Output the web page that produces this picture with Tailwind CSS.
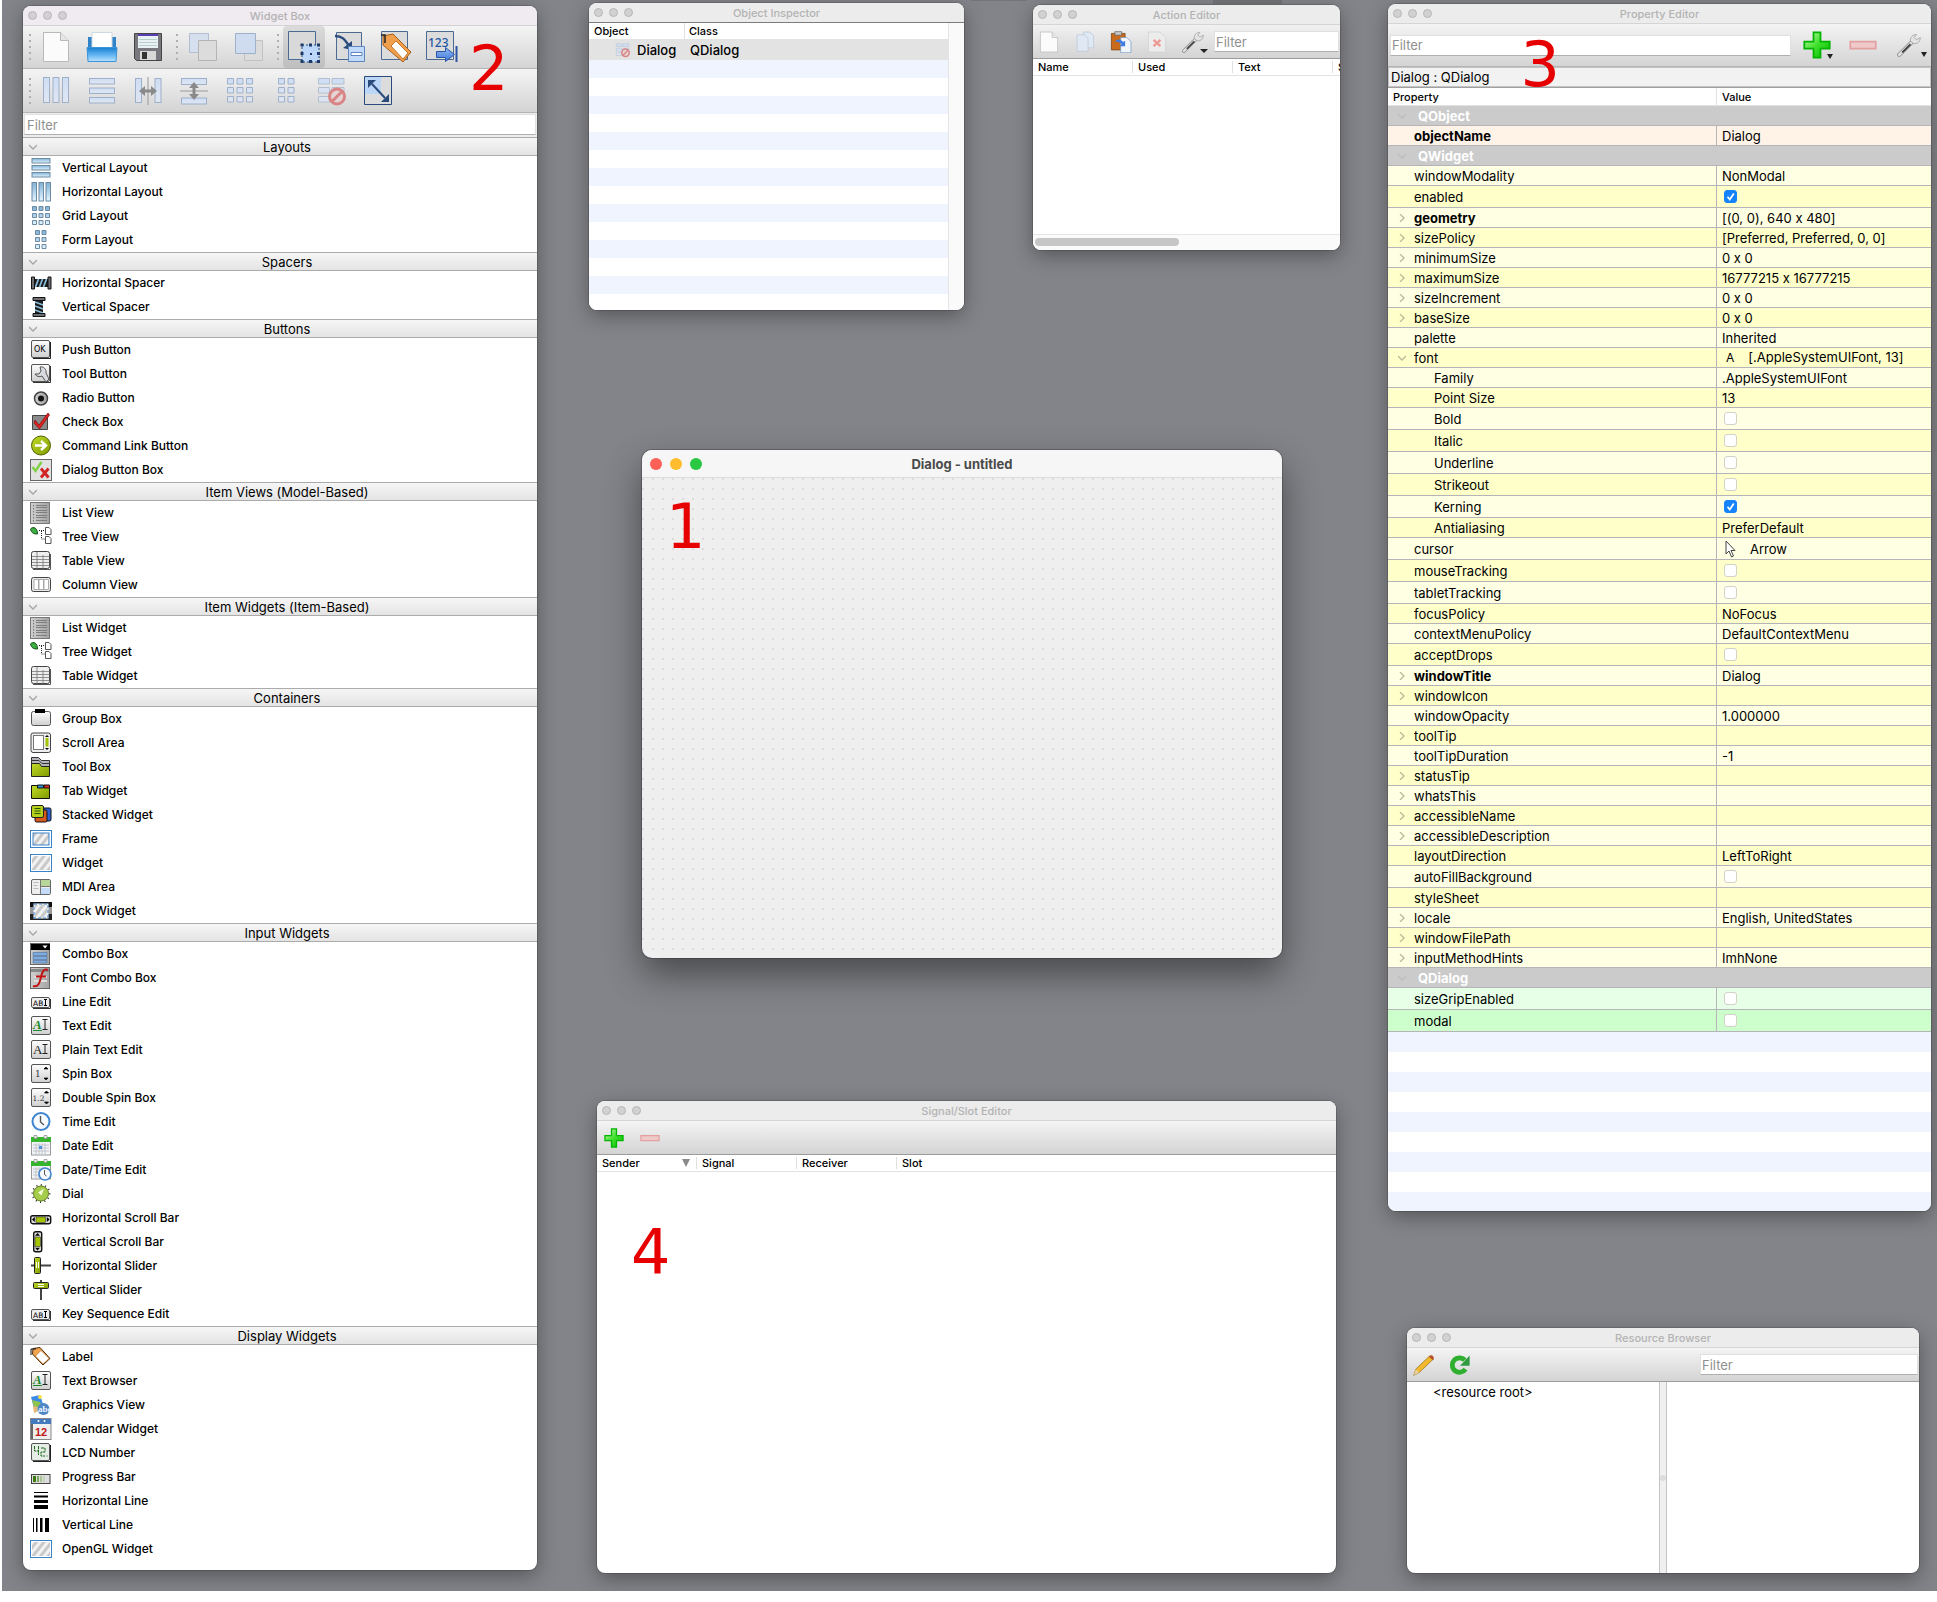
<!DOCTYPE html>
<html lang="en">
<head>
    <meta charset="UTF-8">
    <title>Qt Designer</title>
    <script src="https://cdn.jsdelivr.net/npm/@tailwindcss/browser@4"></script>
</head>
<body class="bg-white font-['Inter',sans-serif] text-[12px] leading-4 font-medium text-black [font-variant-ligatures:no-contextual]">

    <!-- gradients have to stay rendered, a hidden svg would drop them -->
    <svg class="absolute size-0" xmlns="http://www.w3.org/2000/svg">
        <defs>
            <linearGradient id="blue" x1="0" y1="0" x2="0" y2="1"><stop offset="0" stop-color="#7fb2d6"/><stop offset="1" stop-color="#e3f5ff"/></linearGradient>
            <linearGradient id="pale" x1="0" y1="0" x2="0" y2="1"><stop offset="0" stop-color="#cfdef5"/><stop offset="1" stop-color="#dfe6f1"/></linearGradient>
            <linearGradient id="grey" x1="0" y1="0" x2="0" y2="1"><stop offset="0" stop-color="#fdfdfd"/><stop offset="1" stop-color="#cfcfcf"/></linearGradient>
            <linearGradient id="dark" x1="0" y1="0" x2="1" y2="0"><stop offset="0" stop-color="#d0d0d0"/><stop offset="1" stop-color="#a2a2a2"/></linearGradient>
            <linearGradient id="green" x1="0" y1="0" x2="1" y2="1"><stop offset="0" stop-color="#c8f7b0"/><stop offset="0.5" stop-color="#3fe02c"/><stop offset="1" stop-color="#00b800"/></linearGradient>
            <linearGradient id="tray" x1="0" y1="0" x2="0" y2="1"><stop offset="0" stop-color="#1a7fd0"/><stop offset="0.5" stop-color="#5db2f0"/><stop offset="1" stop-color="#b9e2ff"/></linearGradient>
            <linearGradient id="arrow" x1="0" y1="0" x2="0" y2="1"><stop offset="0" stop-color="#8fbaf5"/><stop offset="1" stop-color="#3f78d8"/></linearGradient>
            <linearGradient id="lime" x1="0" y1="0" x2="1" y2="1"><stop offset="0" stop-color="#c3dc28"/><stop offset="1" stop-color="#7f9a00"/></linearGradient>
            <pattern id="hatch" width="6" height="6" patternUnits="userSpaceOnUse" patternTransform="rotate(38)"><rect width="6" height="6" fill="#f2f2f2"/><rect width="3" height="6" fill="#c9c9c9"/></pattern>
        </defs>
    </svg>

    <!-- icons -->
    <svg class="hidden" xmlns="http://www.w3.org/2000/svg">
        <!-- widget box, 22x22 -->
        <symbol id="vlayout" viewBox="0 0 22 22"><g fill="url(#blue)" stroke="#6d8aa3"><rect x="2" y="1.5" width="18" height="4.5"/><rect x="2" y="8.5" width="18" height="4.5"/><rect x="2" y="15.5" width="18" height="4.5"/></g></symbol>
        <symbol id="hlayout" viewBox="0 0 22 22"><g fill="url(#blue)" stroke="#6d8aa3"><rect x="2" y="1.5" width="4.5" height="18.5"/><rect x="9" y="1.5" width="4.5" height="18.5"/><rect x="16" y="1.5" width="4.5" height="18.5"/></g></symbol>
        <symbol id="gridlayout" viewBox="0 0 22 22"><g fill="url(#blue)" stroke="#6d8aa3"><path d="M2.5 1.5h4v4h-4zM9 1.5h4v4h-4zM15.500 1.500h4v4h-4zM2.500 8.500h4v4h-4zM9 8.500h4v4h-4zM15.500 8.500h4v4h-4zM2.500 15.500h4v4h-4zM9 15.500h4v4h-4zM15.500 15.500h4v4h-4z"/></g></symbol>
        <symbol id="formlayout" viewBox="0 0 22 22"><g fill="url(#blue)" stroke="#6d8aa3"><path d="M5.5 1.500h4v4h-4zM12 1.500h4v4h-4zM5.500 8.500h4v4h-4zM12 8.500h4v4h-4zM5.500 15.500h4v4h-4zM12 15.500h4v4h-4z"/></g></symbol>
        <symbol id="hspacer" viewBox="0 0 22 22"><path d="M4 7h14v8H4z" fill="#1b1b1b"/><path d="M5.500 15l3-8M9.500 15l3-8M13.500 15l3-8" stroke="#86bcd8" stroke-width="1.800"/><path d="M1.500 5h3v12h-3zM18 5h3v12h-3z" fill="#6d6f72" stroke="#111"/></symbol>
        <symbol id="vspacer" viewBox="0 0 22 22"><path d="M5 4h8v14H5z" fill="#1b1b1b"/><path d="M5 6l8 3M5 10l8 3M5 14l8 3" stroke="#86bcd8" stroke-width="1.600"/><path d="M3 1.500h12v3H3zM3 17.500h12v3H3z" fill="#6d6f72" stroke="#111"/></symbol>
        <symbol id="pushbutton" viewBox="0 0 22 22"><rect x="1.500" y="1.500" width="18" height="17" rx="1.500" fill="url(#grey)" stroke="#555"/><path d="M3 19.500h17.500V3" fill="none" stroke="#222"/><text x="4" y="13" font-size="8" font-family="DejaVu Sans" fill="#000">OK</text></symbol>
        <symbol id="toolbutton" viewBox="0 0 22 22"><rect x="1.500" y="1.500" width="18" height="17" rx="1.500" fill="url(#grey)" stroke="#555"/><path d="M3 19.500h17.500V3" fill="none" stroke="#333"/><path d="M10 4a5 5 0 0 1 6 6l3 6-3 3-4-6a5 5 0 0 1-7-2l4 0 2-3z" fill="#d7dade" stroke="#555"/></symbol>
        <symbol id="radio" viewBox="0 0 22 22"><circle cx="11" cy="11.500" r="6.500" fill="url(#dark)" stroke="#444" stroke-width="1.500"/><circle cx="11" cy="11.500" r="3" fill="#111"/></symbol>
        <symbol id="checkbox" viewBox="0 0 22 22"><path d="M2.500 4.500h15v14h-15z" fill="#8b8b8b" stroke="#444"/><path d="M5 9l4 5L18 2l1.500 2L9.500 18 4 12z" fill="#e02020" stroke="#7d0f0f" stroke-width=".7"/></symbol>
        <symbol id="commandlink" viewBox="0 0 22 22"><circle cx="11" cy="10.500" r="9.500" fill="url(#lime)" stroke="#4f5f00"/><path d="M5 10.500h10M11 6l5 4.500-5 4.500" fill="none" stroke="#fff" stroke-width="2.400"/></symbol>
        <symbol id="buttonbox" viewBox="0 0 22 22"><rect x=".5" y=".5" width="21" height="21" fill="#e2e2e2" stroke="#666"/><path d="M2.500 8l3 4 6-9" fill="none" stroke="#7fd043" stroke-width="2.400"/><path d="M11 9.500l7.500 9M18.500 9.500l-7.500 9" stroke="#d02424" stroke-width="2.800"/></symbol>
        <symbol id="list" viewBox="0 0 22 22"><rect x=".5" y=".5" width="19" height="21" fill="url(#dark)" stroke="#777"/><path d="M6 3.500h11M6 5.500h11M6 8.500h11M6 10.500h11M6 13.500h11M6 15.500h11M6 18.500h11" stroke="#777" stroke-width=".9"/><path d="M3.500 3v17" stroke="#777" stroke-dasharray="1.500 1.500"/></symbol>
        <symbol id="tree" viewBox="0 0 22 22"><path d="M.5 3c3-3 7-1 7 5-4 0-6-1-7-5z" fill="#3cb043" stroke="#134d17"/><path d="M9 4.500h6M11.500 5v8h4" fill="none" stroke="#222" stroke-dasharray="1 1"/><path d="M15.500 1.500h3.500l2 2v5h-5.500zM15.500 10.500h3.500l2 2v5h-5.500z" fill="#fff" stroke="#555"/></symbol>
        <symbol id="table" viewBox="0 0 22 22"><rect x="1.500" y="1.500" width="18" height="17" rx="2" fill="#eee" stroke="#444"/><path d="M2 6.500h17.500M2 9.500h17.500M2 12.500h17.500M2 15.500h17.500M7 2v17M13 5v14" stroke="#777" stroke-width=".8"/><path d="M3 19.500h17.500V4" fill="none" stroke="#555"/></symbol>
        <symbol id="column" viewBox="0 0 22 22"><rect x="1.500" y="3.500" width="19" height="14" rx="2" fill="#e9e9e9" stroke="#444"/><path d="M4 5.500h4.500v10H4zM9 5.500h4.500v10H9zM14 5.500h4.500v10H14z" fill="#fff" stroke="#999" stroke-width=".8"/></symbol>
        <symbol id="groupbox" viewBox="0 0 22 22"><rect x="1.500" y="3.500" width="19" height="14" rx="2" fill="url(#grey)" stroke="#555"/><rect x="5" y="1" width="10" height="4" fill="#000"/></symbol>
        <symbol id="scrollarea" viewBox="0 0 22 22"><rect x="1" y="1" width="19.500" height="19.500" rx="2" fill="#eee" stroke="#444"/><rect x="3.500" y="3.500" width="10" height="14" fill="#fff" stroke="#777"/><rect x="15.500" y="6" width="3" height="8.500" fill="#a4c400"/><path d="M15 5l2-2 2 2zM15 16l2 2 2-2z"/></symbol>
        <symbol id="toolbox" viewBox="0 0 22 22"><path d="M1.500 1.500h7l3 3h8V12h-18z" fill="#b3b5b8" stroke="#333"/><path d="M2 4.500h7l3 3h7" fill="none" stroke="#333"/><path d="M1.500 7.500h8l2 3h8v10h-18z" fill="url(#lime)" stroke="#222"/></symbol>
        <symbol id="tabwidget" viewBox="0 0 22 22"><path d="M1.500 5.500h18v13h-18z" fill="url(#lime)" stroke="#111"/><path d="M7.500 5h6v3h-6z" fill="#2d90dd" stroke="#111"/><path d="M14 5h5.500v3H14z" fill="#dd2a2a" stroke="#111"/></symbol>
        <symbol id="stacked" viewBox="0 0 22 22"><rect x="10" y="4" width="11" height="13" rx="1.500" fill="#2b5fd0" stroke="#111"/><rect x="5" y="6" width="12" height="12" rx="1.500" fill="#d65a1b" stroke="#111"/><rect x="1.500" y="1.500" width="12" height="12" rx="1.500" fill="#b5cf1c" stroke="#222"/><path d="M4.500 4.500h6M4.500 7h6M4.500 9.500h6" stroke="#265b00"/></symbol>
        <symbol id="frame" viewBox="0 0 22 22"><rect x=".5" y="2.500" width="21" height="17" fill="#fff" stroke="#3a83c9"/><rect x="3" y="5" width="16" height="12" fill="url(#hatch)" stroke="#3a83c9"/></symbol>
        <symbol id="widget" viewBox="0 0 22 22"><rect x=".5" y="2.500" width="21" height="17" fill="#fff" stroke="#3a83c9"/><rect x="2" y="4" width="18" height="14" fill="url(#hatch)"/></symbol>
        <symbol id="mdi" viewBox="0 0 22 22"><rect x="1.500" y="3.500" width="19" height="15" rx="1.500" fill="#eee" stroke="#666"/><path d="M11 4h9v6h-9z" fill="#b7d79a"/><path d="M10.500 12h9.500v6h-9.500z" fill="#c4dcf8"/><path d="M10.500 4v14M10.500 10.500H20" stroke="#777"/><path d="M3.500 6.500h5M3.500 9.500h4M3.500 12.500h5" stroke="#bbb"/></symbol>
        <symbol id="dock" viewBox="0 0 22 22"><rect y="2" width="22" height="5" fill="#111"/><rect y="7" width="22" height="7" fill="#999"/><rect y="14" width="22" height="6" fill="#222"/><rect x="4" y="4" width="14" height="14" fill="url(#hatch)" stroke="#fff"/><rect x="4" y="4" width="14" height="14" fill="none" stroke="#3a83c9" stroke-dasharray="3 2"/></symbol>
        <symbol id="combo" viewBox="0 0 22 22"><rect x=".5" y=".5" width="19" height="21" fill="url(#dark)" stroke="#666"/><rect x="1" y="1" width="19" height="6" fill="#000"/><path d="M12.500 2.500h5l-2.500 3z" fill="#fff"/><path d="M3 9.500h14v3H3zM3 13.500h14v3H3zM3 17.500h14v2.500H3z" fill="#7dacdf" stroke="#4a6f9d" stroke-width=".6"/></symbol>
        <symbol id="fontcombo" viewBox="0 0 22 22"><rect x=".5" y=".5" width="19" height="21" fill="url(#dark)" stroke="#666"/><path d="M1 2h18v3H1z" fill="#888"/><path d="M4 10h13M4 14h13" stroke="#ddd" stroke-width="2"/><path d="M18 3c-5-2-6 3-7 7s-2 11-8 9M6 9.500h10" fill="none" stroke="#c11313" stroke-width="2"/></symbol>
        <symbol id="lineedit" viewBox="0 0 22 22"><rect x="1.500" y="6.500" width="18" height="10" rx="1.500" fill="#eee" stroke="#555"/><path d="M3 17.500h17.500V8" fill="none" stroke="#333"/><text x="3" y="14.500" font-size="7.500" font-weight="500" font-family="DejaVu Sans">AB</text><path d="M14 8.500h3M14 14.500h3M15.500 9v5" stroke="#000"/></symbol>
        <symbol id="textedit" viewBox="0 0 22 22"><rect x="1.500" y="1.500" width="19" height="18" rx="1.500" fill="url(#grey)" stroke="#555"/><text x="3" y="14" font-size="13" font-style="italic" font-weight="700" font-family="Liberation Serif" fill="#1c8a2c">A</text><path d="M3 15.500h9" stroke="#1c8a2c"/><path d="M12.500 4.500h5M12.500 14.500h5M15 5v9" stroke="#222"/></symbol>
        <symbol id="plaintext" viewBox="0 0 22 22"><rect x="1.500" y="1.500" width="19" height="18" rx="1.500" fill="url(#grey)" stroke="#555"/><text x="3" y="15" font-size="13" font-weight="400" font-family="Liberation Serif" fill="#222">A</text><path d="M12.500 5.500h5M12.500 14.500h5M15 6v9" stroke="#222"/></symbol>
        <symbol id="spin" viewBox="0 0 22 22"><rect x="1.500" y="1.500" width="19" height="18" rx="1.500" fill="url(#grey)" stroke="#555"/><text x="5" y="14" font-size="9" font-family="DejaVu Serif" fill="#333">1</text><path d="M14 6l2-2 2 2zM14 15l2 2 2-2z" stroke="#000" stroke-width=".7"/></symbol>
        <symbol id="dspin" viewBox="0 0 22 22"><rect x="1.500" y="1.500" width="19" height="18" rx="1.500" fill="url(#grey)" stroke="#555"/><text x="2.500" y="13.500" font-size="7.500" font-family="DejaVu Serif" fill="#333">1.2</text><path d="M14.500 6l2-2 2 2zM14.500 15l2 2 2-2z" stroke="#000" stroke-width=".7"/></symbol>
        <symbol id="time" viewBox="0 0 22 22"><circle cx="11" cy="10.500" r="8.500" fill="#f7fbff" stroke="#3f86cf" stroke-width="2"/><path d="M10.500 5v6l3.500 3" fill="none" stroke="#555" stroke-width="1.400"/></symbol>
        <symbol id="date" viewBox="0 0 22 22"><rect x="1.500" y="3" width="19" height="17" fill="#f1f3f6" stroke="#999"/><path d="M1 2h20v5H1z" fill="#35b52c"/><path d="M4 .5h3v3H4zM14 .5h3v3h-3z" fill="#eee" stroke="#888" stroke-width=".7"/><path d="M3 10h16M3 13h16M3 16h16M6 8v11M9 8v11M12 8v11M15 8v11" stroke="#b9bcc4" stroke-width=".8"/><rect x="9" y="11" width="3" height="3" fill="#4c8fe0"/></symbol>
        <symbol id="datetime" viewBox="0 0 22 22"><use href="#date"/><circle cx="15" cy="15" r="6" fill="#f7fbff" stroke="#3f86cf" stroke-width="1.600"/><path d="M14.500 11v4.500l2 1.500" fill="none" stroke="#555"/></symbol>
        <symbol id="dial" viewBox="0 0 22 22"><circle cx="11" cy="10.500" r="8.500" fill="none" stroke="#333" stroke-width="2" stroke-dasharray="1 3.400"/><circle cx="11" cy="10.500" r="7.500" fill="#a6cc4b" stroke="#5f7f1c"/><path d="M14 5.500l-6 4 3.500 3z" fill="#f3fbdc"/></symbol>
        <symbol id="hscroll" viewBox="0 0 22 22"><rect x=".7" y="8.700" width="20" height="8" rx="2" fill="#ddd" stroke="#111" stroke-width="1.400"/><rect x="6" y="10" width="9.500" height="5.500" fill="#a4c400" stroke="#333" stroke-width=".6"/><path d="M4.800 10v5L2 12.500zM16.800 10v5l2.800-2.500z"/></symbol>
        <symbol id="vscroll" viewBox="0 0 22 22"><rect x="3.700" y=".7" width="8" height="20" rx="2" fill="#ddd" stroke="#111" stroke-width="1.400"/><rect x="5" y="6" width="5.500" height="9.500" fill="#a4c400" stroke="#333" stroke-width=".6"/><path d="M5 4.800h5L7.500 2zM5 16.800h5l-2.500 2.800z"/></symbol>
        <symbol id="hslider" viewBox="0 0 22 22"><path d="M1 10.500h20" stroke="#444" stroke-width="2"/><rect x="4.500" y="2.500" width="6" height="16" rx="1" fill="url(#lime)" stroke="#222"/><path d="M6.500 7v6M8.500 7v6" stroke="#fff"/></symbol>
        <symbol id="vslider" viewBox="0 0 22 22"><path d="M11 1v20" stroke="#444" stroke-width="2"/><rect x="3.500" y="3.500" width="15" height="6" rx="1" fill="url(#lime)" stroke="#222"/><path d="M8 5.500h6M8 7.500h6" stroke="#fff"/></symbol>
        <symbol id="label" viewBox="0 0 22 22"><path d="M3 2.500l7-1 10 11-7 6.500L2.500 8z" fill="#f3a24e" stroke="#4a2a08"/><path d="M11 4.500l8 8-6 5.500L5.500 10z" fill="#fff" stroke="#b56b20" stroke-width=".6"/><path d="M1 9V3h5" fill="none" stroke="#111"/></symbol>
        <symbol id="graphics" viewBox="0 0 22 22"><path d="M1 3l9-2 4 12-9 5z" fill="#3a8ae6"/><path d="M2 6l8 2 2 5-7 4z" fill="#8fc44c"/><path d="M3 12l5 1 1 4-5 2z" fill="#e4b97a"/><circle cx="10" cy="3" r="2" fill="#fbe24b"/><circle cx="13.500" cy="15" r="6" fill="#4d87c5"/><text x="8" y="17.500" font-size="9" font-weight="700" font-family="Liberation Serif" fill="#eef5ff">abc</text></symbol>
        <symbol id="calendar" viewBox="0 0 22 22"><rect x=".5" y=".5" width="20.500" height="21" fill="#eee" stroke="#888"/><path d="M1 1h20v5H1z" fill="#4278bd"/><path d="M1 6h2v15H1z" fill="#666"/><circle cx="8.500" cy="3" r="1" fill="#fff"/><circle cx="14.500" cy="3" r="1" fill="#fff"/><text x="5" y="18" font-size="11" font-weight="700" font-family="Liberation Sans" fill="#c01818">12</text></symbol>
        <symbol id="lcd" viewBox="0 0 22 22"><rect x="1.500" y="1.500" width="18" height="17" rx="1.500" fill="#e6ede6" stroke="#555"/><path d="M3 19.500h17.500V3" fill="none" stroke="#222"/><path d="M4.500 4v5h4M8.500 4v9M11 6h4v4h-4v4h4M16.500 14h1" fill="none" stroke="#1c6b1c" stroke-dasharray="3 .6"/></symbol>
        <symbol id="progress" viewBox="0 0 22 22"><rect x="1.500" y="8.500" width="18.500" height="9" fill="#ddd" stroke="#444"/><path d="M3 10h3v6H3z" fill="#3d7a12"/><path d="M7 10h2v6H7z" fill="#7fa75c"/><path d="M10 10h2v6h-2z" fill="#aac493"/><path d="M13 10h2v6h-2z" fill="#c5d3ba"/></symbol>
        <symbol id="hline" viewBox="0 0 22 22"><path d="M4 2h14v1H4zM4 5.500h14v2H4zM4 10h14v3H4zM4 15h14v4H4z"/></symbol>
        <symbol id="vline" viewBox="0 0 22 22"><path d="M3 4h1v14H3zM6 4h1.500v14H6zM10 4h2.500v14H10zM15 4h4v14h-4z"/></symbol>

        <!-- toolbars, 32x32 -->
        <symbol id="page" viewBox="0 0 32 32"><path d="M3.500 1.500h17l8 8v21h-25z" fill="#fbfbfb" stroke="#b9b9b9"/><path d="M20.500 1.500v8h8" fill="#e6e6e6" stroke="#b9b9b9"/></symbol>
        <symbol id="open" viewBox="0 0 32 32"><path d="M2 6h28v12H2z" fill="#2f84c9"/><path d="M6 1.500h20V18H6z" fill="#fff" stroke="#cfd9e2"/><path d="M1 16.500h30l-1 14H2z" fill="url(#tray)" stroke="#3b93d8"/></symbol>
        <symbol id="save" viewBox="0 0 32 32"><path d="M2.500 2.500h27v27h-25l-2-2z" fill="#77777d" stroke="#444"/><path d="M6 3h20v14H6z" fill="#e8f2f2"/><path d="M6 3h20v2H6z" fill="#5a3fb0"/><path d="M7 8.500h18M7 11.500h18M7 14.500h18" stroke="#b9cfcf"/><path d="M8 20h16v9H8z" fill="#d8d8d8"/><path d="M10 21h5v7h-5z" fill="#333"/></symbol>
        <symbol id="back" viewBox="0 0 32 32"><path d="M2.500 2.500h19v19h-19z" fill="#d5dfee" stroke="#b3bfd0"/><path d="M11.500 9.500h18v20h-18z" fill="#dcdcdc" stroke="#b4b4b4"/></symbol>
        <symbol id="front" viewBox="0 0 32 32"><path d="M11.500 9.500h18v20h-18z" fill="#dcdcdc" stroke="#c2c2c2"/><path d="M2.500 2.500h20v20h-20z" fill="#cfdcf0" stroke="#9fb0cb"/></symbol>
        <symbol id="editwidgets" viewBox="0 0 32 32"><path d="M.5.5h27v28H.5z" fill="#d9d9d9" stroke="#4a6a92"/><path d="M14 14h17v17H14z" fill="#bdd7fb"/><path d="M14 14h17v17H14z" fill="none" stroke="#2b4b7c" stroke-dasharray="2 2"/><path d="M12.500 12.500h3v3h-3zM21 12.500h3v3h-3zM29 12.500h3v3h-3zM12.500 21h3v3h-3zM29 21h3v3h-3zM12.500 29h3v3h-3zM21 29h3v3h-3zM29 29h3v3h-3zM22 22h2v2h-2z" fill="#1c3869"/></symbol>
        <symbol id="signals" viewBox="0 0 32 32"><path d="M2.500 1.500h25v27h-25z" fill="#dcdcdc" stroke="#4a6a92"/><path d="M1 5c8 0 10 4 14 10" fill="none" stroke="#2b4b7c" stroke-width="2.400"/><path d="M18 10v9l-9-2z" fill="#2b4b7c"/><path d="M14.500 15.500h16v15h-16z" fill="#c2dafb" stroke="#5f86bd"/><path d="M17 21.500h11v3H17z" fill="#fff" stroke="#5f86bd"/></symbol>
        <symbol id="buddy" viewBox="0 0 32 32"><path d="M1.500.5h26v28h-26z" fill="#dcdcdc" stroke="#4a6a92"/><path d="M3 5l10-2 18 18-8 10L3 14z" fill="#f0a04c" stroke="#a55d17"/><path d="M16 10l12 12-5 6-12-13z" fill="#fff" stroke="#c4762a"/><path d="M5 12V4H1" fill="none" stroke="#222" stroke-width="1.500"/></symbol>
        <symbol id="taborder" viewBox="0 0 32 32"><path d="M.5.5h27v28H.5z" fill="#dcdcdc" stroke="#4a6a92"/><text x="2" y="16" font-size="12" font-weight="500" font-family="Noto Sans" fill="#1f57a5">123</text><path d="M10.500 20.500h9v-4l9 7-9 7v-4h-9z" fill="url(#arrow)" stroke="#2b55a3"/><path d="M30.500 15v16" stroke="#2b55a3" stroke-width="2"/></symbol>
        <symbol id="t-h" viewBox="0 0 32 32"><g fill="url(#pale)" stroke="#9fb0cb"><rect x="3.500" y="2.500" width="6" height="25"/><rect x="13" y="2.500" width="6" height="25"/><rect x="22.500" y="2.500" width="6" height="25"/></g></symbol>
        <symbol id="t-v" viewBox="0 0 32 32"><g fill="url(#pale)" stroke="#9fb0cb"><rect x="3.500" y="3.500" width="25" height="5.500"/><rect x="3.500" y="13" width="25" height="5.500"/><rect x="3.500" y="22.500" width="25" height="5.500"/></g></symbol>
        <symbol id="t-hs" viewBox="0 0 32 32"><g fill="url(#pale)" stroke="#9fb0cb"><rect x="3.500" y="3.500" width="6" height="24"/><rect x="23" y="3.500" width="6" height="24"/></g><path d="M16 2v28" stroke="#999"/><path d="M7 16l6-5v3.500h6V11l6 5-6 5v-3.500h-6V21z" fill="#8a8a8a"/></symbol>
        <symbol id="t-vs" viewBox="0 0 32 32"><g fill="url(#pale)" stroke="#9fb0cb"><rect x="3.500" y="3.500" width="25" height="6"/><rect x="3.500" y="23" width="25" height="6"/></g><path d="M2 16h28" stroke="#999"/><path d="M16 7l-5 6h3.500v6H11l5 6 5-6h-3.500v-6H21z" fill="#8a8a8a"/></symbol>
        <symbol id="t-grid" viewBox="0 0 32 32"><path d="M3.500 3.500h6v5.500h-6zM13 3.500h6v5.500h-6zM22.500 3.500h6v5.500h-6zM3.500 12.500h6v5.500h-6zM13 12.500h6v5.500h-6zM22.500 12.500h6v5.500h-6zM3.500 21.500h6v5.500h-6zM13 21.500h6v5.500h-6zM22.500 21.500h6v5.500h-6z" fill="url(#pale)" stroke="#9fb0cb"/></symbol>
        <symbol id="t-form" viewBox="0 0 32 32"><path d="M8.500 3.500h6v5.500h-6zM18 3.500h6v5.500h-6zM8.500 12.500h6v5.500h-6zM18 12.500h6v5.500h-6zM8.500 21.500h6v5.500h-6zM18 21.500h6v5.500h-6z" fill="url(#pale)" stroke="#9fb0cb"/></symbol>
        <symbol id="t-break" viewBox="0 0 32 32"><path d="M2.500 3.500h11v5.500h-11zM16 3.500h12v5.500H16zM2.500 12.500h11v5.500h-11zM16 12.500h12v5.500H16zM2.500 21.500h11v5.500h-11z" fill="url(#pale)" stroke="#b3bfd0"/><circle cx="21" cy="21.500" r="7.500" fill="#e6d3d3" stroke="#d98585" stroke-width="3"/><path d="M16 26.500l10-10" stroke="#d98585" stroke-width="3"/></symbol>
        <symbol id="t-adjust" viewBox="0 0 32 32"><path d="M2.500 1.500h27v28h-27z" fill="#dcdcdc" stroke="#2b4b7c"/><path d="M3 2h16v17H3z" fill="#bcd6f7"/><path d="M10 9l13 14" stroke="#2b4b7c" stroke-width="2"/><path d="M6 5h8l-8 8zM27 27h-8l8-8z" fill="#2b4b7c"/></symbol>
        <symbol id="copy" viewBox="0 0 32 32"><g fill="#dfe8f3" stroke="#b9c6d6"><path d="M13.500 1.500h10l5 5v18h-15z"/><path d="M4.500 5.500h11l5 5v19h-16z"/></g></symbol>
        <symbol id="paste" viewBox="0 0 32 32"><path d="M2 3.500h20v24H2z" fill="#c96a1c" stroke="#6f3a0f"/><path d="M7 1h10v5H7z" fill="#ccc" stroke="#555"/><path d="M15.500 9.500h9l6 6v16h-15z" fill="#f2f6fb" stroke="#6d94c4"/><path d="M7 15c4-4 9-3 12 1l3-2v8h-8l3-3c-3-2-6-3-10-4z" fill="#3f7be0"/></symbol>
        <symbol id="delete" viewBox="0 0 32 32"><path d="M3.500 1.500h17l8 8v21h-25z" fill="#ececec" stroke="#cfcfcf"/><path d="M11 13l10 9M21 13l-10 9" stroke="#ee9a94" stroke-width="3.500"/></symbol>
        <symbol id="wrench" viewBox="0 0 32 32"><path d="M3 29L20 12" stroke="#8a8a8a" stroke-width="5.500" stroke-linecap="round"/><path d="M3 29L20 12" stroke="#e0e0e0" stroke-width="3.500" stroke-linecap="round"/><path d="M7 26L18 15" stroke="#444" stroke-width="2.400"/><path d="M18 11c-1-5 3-9 8-9l-3 4 3 3 5-3c0 6-4 9-9 8z" fill="#e4e4e4" stroke="#999"/></symbol>
        <symbol id="plus" viewBox="0 0 32 32"><path d="M12 1.500h8V12h10.500v8H20v10.500h-8V20H1.500v-8H12z" fill="url(#green)" stroke="#00b400" stroke-width="2"/></symbol>
        <symbol id="minus" viewBox="0 0 32 32"><path d="M1.500 12h29v8h-29z" fill="#f0c9c9" stroke="#e2a0a0" stroke-width="2"/></symbol>
        <symbol id="pencil" viewBox="0 0 32 32"><path d="M1 31l3-9L24 3l5 5L9 27z" fill="#f2b92c" stroke="#8d6a1a"/><path d="M24 3c2-3 8 1 6 5l-1 1-6-5z" fill="#b5532a"/><path d="M1 31l3-9 5 5z" fill="#e9cfa0"/></symbol>
        <symbol id="reload" viewBox="0 0 32 32"><path d="M24 22a10.500 10.500 0 1 1-1-13" fill="none" stroke="#2fae2f" stroke-width="7"/><path d="M30 2v15H16l5-5z" fill="#2f9a3f"/></symbol>
        <symbol id="pointer" viewBox="0 0 16 18"><path d="M4 1v13l3-3 2.500 6 2-1L9 10.500h4z" fill="#fff" stroke="#444"/></symbol>
        <symbol id="down" viewBox="0 0 8 8"><path d="M0 2l4 4 4-4" fill="none" stroke="currentColor" stroke-width="1.300"/></symbol>
        <symbol id="right" viewBox="0 0 8 8"><path d="M2 0l4 4-4 4" fill="none" stroke="currentColor" stroke-width="1.300"/></symbol>
    </svg>

    <main class="relative ml-[2px] min-h-[1591px] overflow-hidden bg-[#838489]">
        <div class="absolute top-0 left-[969px] h-px w-14 bg-[#737478]"></div>
        <div class="absolute top-0 left-[1211px] h-1 w-[69px] bg-[#737478]"></div>

        <!-- Widget Box -->
        <section class="absolute top-[6px] left-[21px] w-[514px] overflow-hidden rounded-lg bg-white pb-[9px] shadow-[0_6px_20px_rgba(0,0,0,0.35)] ring-1 ring-black/15">
            <header class="grid h-5 grid-cols-[1fr_auto_1fr] items-center border-b border-[#d5d2d5] bg-[#efebf0] px-[5px]">
                <span class="flex gap-[6px]"><i class="size-[9px] rounded-full border border-[#b8b6b8] bg-[#d2d0d2]"></i><i class="size-[9px] rounded-full border border-[#b8b6b8] bg-[#d2d0d2]"></i><i class="size-[9px] rounded-full border border-[#b8b6b8] bg-[#d2d0d2]"></i></span>
                <h2 class="text-[11px] text-[#b3b1b4]">Widget Box</h2>
            </header>
            <div id="main-tools" class="flex h-[43px] gap-1 border-b border-[#b4b4b4] bg-linear-to-b from-[#f4f4f4] to-[#d4d4d4] pl-[3px]"></div>
            <div id="layout-tools" class="flex h-[44px] gap-1 border-b border-[#b4b4b4] bg-linear-to-b from-[#f4f4f4] to-[#d4d4d4] pl-[3px]"></div>
            <div class="bg-[#ececec] px-px pt-px pb-[2px]">
                <input type="text" aria-label="Filter widgets" placeholder="Filter" class="block h-[21px] w-full border border-[#e0e0e0] border-b-[#b0b0b0] bg-white px-[2px] pt-px text-[13px] font-normal placeholder-[#8f8f8f] outline-none">
            </div>
            <div id="widgets"></div>
        </section>

        <!-- Object Inspector -->
        <section class="absolute top-[3px] left-[587px] flex h-[307px] w-[375px] flex-col overflow-hidden rounded-lg bg-white shadow-[0_6px_20px_rgba(0,0,0,0.35)] ring-1 ring-black/15">
            <header class="grid h-5 shrink-0 grid-cols-[1fr_auto_1fr] items-center border-b border-[#7c7c7c] bg-[#ececec] px-[5px]">
                <span class="flex gap-[6px]"><i class="size-[9px] rounded-full border border-[#b6b6b6] bg-[#d1d1d1]"></i><i class="size-[9px] rounded-full border border-[#b6b6b6] bg-[#d1d1d1]"></i><i class="size-[9px] rounded-full border border-[#b6b6b6] bg-[#d1d1d1]"></i></span>
                <h2 class="text-[11px] text-[#b3b3b3]">Object Inspector</h2>
            </header>
            <div class="flex flex-1">
                <div class="flex flex-1 flex-col">
                    <table class="w-full table-fixed border-separate border-spacing-0 text-left">
                        <thead class="text-[11px]">
                            <tr class="h-4">
                                <th class="w-[95px] py-0 pl-[5px] font-medium">Object</th>
                                <th class="border-l border-[#e0e0e0] py-0 pl-1 font-medium">Class</th>
                            </tr>
                        </thead>
                        <tbody>
                            <tr class="h-[21px] bg-[#e3e3e3] text-[13px]">
                                <td class="pl-[26px]"><span class="flex items-center gap-[6px]"><svg class="size-4"><use href="#t-break"/></svg>Dialog</span></td>
                                <td class="pl-[6px]">QDialog</td>
                            </tr>
                        </tbody>
                    </table>
                    <div class="flex-1 bg-[repeating-linear-gradient(#f0f4fe_0_18px,#fff_18px_36px)]"></div>
                </div>
                <div class="w-4 border-l border-[#e4e4e4] bg-[#fafafa]"></div>
            </div>
        </section>

        <!-- Action Editor -->
        <section class="absolute top-[5px] left-[1031px] flex h-[245px] w-[307px] flex-col overflow-hidden rounded-lg bg-white shadow-[0_6px_20px_rgba(0,0,0,0.35)] ring-1 ring-black/15">
            <header class="grid h-5 shrink-0 grid-cols-[1fr_auto_1fr] items-center border-b border-[#d5d5d5] bg-[#ececec] px-[5px]">
                <span class="flex gap-[6px]"><i class="size-[9px] rounded-full border border-[#b6b6b6] bg-[#d1d1d1]"></i><i class="size-[9px] rounded-full border border-[#b6b6b6] bg-[#d1d1d1]"></i><i class="size-[9px] rounded-full border border-[#b6b6b6] bg-[#d1d1d1]"></i></span>
                <h2 class="text-[11px] text-[#b3b3b3]">Action Editor</h2>
            </header>
            <div class="flex h-[34px] items-center border-b border-[#9c9c9c] bg-linear-to-b from-[#f1f1f1] to-[#d4d4d4] pr-px pl-[5px]">
                <div class="flex flex-1 gap-[14px]">
                    <button type="button" aria-label="New"><svg class="size-[22px]"><use href="#page"/></svg></button>
                    <button type="button" aria-label="Copy"><svg class="size-[22px]"><use href="#copy"/></svg></button>
                    <button type="button" aria-label="Paste"><svg class="size-[22px]"><use href="#paste"/></svg></button>
                    <button type="button" aria-label="Delete"><svg class="size-[22px]"><use href="#delete"/></svg></button>
                    <button type="button" aria-label="Configure" class="flex items-end"><svg class="size-[22px]"><use href="#wrench"/></svg><span class="-ml-1 border-x-4 border-t-4 border-x-transparent border-t-[#222]"></span></button>
                </div>
                <input type="text" aria-label="Filter actions" placeholder="Filter" class="h-[21px] w-[125px] border border-[#e0e0e0] border-b-[#b0b0b0] bg-white px-px text-[13px] font-normal placeholder-[#8f8f8f] outline-none">
            </div>
            <div class="flex h-[17px] items-center overflow-hidden border-b border-[#e2e2e2] text-[11px] whitespace-nowrap">
                <span class="w-[100px] shrink-0 border-r border-[#e0e0e0] pl-[5px] leading-3">Name</span>
                <span class="w-[100px] shrink-0 border-r border-[#e0e0e0] pl-[5px] leading-3">Used</span>
                <span class="w-[100px] shrink-0 border-r border-[#e0e0e0] pl-[5px] leading-3">Text</span>
                <span class="pl-[5px] leading-3">Shortcut</span>
            </div>
            <div class="flex-1"></div>
            <div class="h-4 border-t border-[#e6e6e6] bg-[#fafafa] px-[2px] py-[3px]"><div class="h-2 w-36 rounded-full bg-[#c6c6c6]"></div></div>
        </section>

        <!-- Property Editor -->
        <section class="absolute top-[4px] right-[6px] flex h-[1207px] w-[543px] flex-col overflow-hidden rounded-lg bg-white shadow-[0_6px_20px_rgba(0,0,0,0.35)] ring-1 ring-black/15">
            <header class="grid h-5 shrink-0 grid-cols-[1fr_auto_1fr] items-center border-b border-[#d5d5d5] bg-[#ececec] px-[5px]">
                <span class="flex gap-[6px]"><i class="size-[9px] rounded-full border border-[#b6b6b6] bg-[#d1d1d1]"></i><i class="size-[9px] rounded-full border border-[#b6b6b6] bg-[#d1d1d1]"></i><i class="size-[9px] rounded-full border border-[#b6b6b6] bg-[#d1d1d1]"></i></span>
                <h2 class="text-[11px] text-[#b3b3b3]">Property Editor</h2>
            </header>
            <div class="flex h-[43px] shrink-0 items-center gap-3 border-b border-[#b4b4b4] bg-linear-to-b from-[#f4f4f4] to-[#d4d4d4] pr-1 pl-[2px]">
                <input type="text" aria-label="Filter properties" placeholder="Filter" class="h-[21px] min-w-0 flex-1 border border-[#e0e0e0] border-b-[#b0b0b0] bg-white px-px text-[13px] font-normal placeholder-[#8f8f8f] outline-none">
                <button type="button" aria-label="Add property" class="flex items-end pr-1"><svg class="size-7"><use href="#plus"/></svg><span class="-ml-1 border-x-3 border-t-5 border-x-transparent border-t-[#222]"></span></button>
                <button type="button" aria-label="Remove property"><svg class="size-7"><use href="#minus"/></svg></button>
                <button type="button" aria-label="Configure" class="flex items-end pl-2"><svg class="size-6"><use href="#wrench"/></svg><span class="border-x-3 border-t-5 border-x-transparent border-t-[#222]"></span></button>
            </div>
            <p class="h-5 shrink-0 border border-[#c4c4c4] bg-[#f2f2f2] px-[2px] text-[13px] leading-[18px] font-normal">Dialog : QDialog</p>
            <table class="w-full table-fixed border-separate border-spacing-0 border-t border-[#a0a0a0] text-left text-[13px] font-normal">
                <thead class="text-[11px]">
                    <tr class="h-[18px]">
                        <th class="w-[328px] border-b border-[#e2e2e2] py-0 pl-[5px] font-medium">Property</th>
                        <th class="border-b border-l border-[#e2e2e2] py-0 pl-[5px] font-medium">Value</th>
                    </tr>
                </thead>
                <tbody id="properties"></tbody>
            </table>
            <div class="flex-1 bg-[repeating-linear-gradient(#f0f4fe_0_20px,#fff_20px_40px)]"></div>
        </section>

        <!-- Form being edited -->
        <section class="absolute top-[450px] left-[640px] w-[640px] overflow-hidden rounded-[10px] bg-[#efefef] shadow-[0_16px_36px_rgba(0,0,0,0.45)] ring-1 ring-black/20">
            <header class="grid h-7 grid-cols-[1fr_auto_1fr] items-center border-b border-[#dcdcdc] bg-[#f6f6f6] px-2">
                <span class="flex gap-2"><i class="size-3 rounded-full bg-[#fe5f57]"></i><i class="size-3 rounded-full bg-[#febc2e]"></i><i class="size-3 rounded-full bg-[#28c840]"></i></span>
                <h2 class="text-[13px] font-bold text-[#4a4a4a]">Dialog - untitled</h2>
            </header>
            <div class="h-[480px] bg-[radial-gradient(circle_at_1px_1px,#dcdcdc_1px,transparent_1px)] bg-[size:10px_10px]"></div>
        </section>

        <!-- Signal/Slot Editor -->
        <section class="absolute top-[1101px] left-[595px] flex h-[472px] w-[739px] flex-col overflow-hidden rounded-lg bg-white shadow-[0_6px_20px_rgba(0,0,0,0.35)] ring-1 ring-black/15">
            <header class="grid h-5 shrink-0 grid-cols-[1fr_auto_1fr] items-center border-b border-[#d5d5d5] bg-[#ececec] px-[5px]">
                <span class="flex gap-[6px]"><i class="size-[9px] rounded-full border border-[#b6b6b6] bg-[#d1d1d1]"></i><i class="size-[9px] rounded-full border border-[#b6b6b6] bg-[#d1d1d1]"></i><i class="size-[9px] rounded-full border border-[#b6b6b6] bg-[#d1d1d1]"></i></span>
                <h2 class="text-[11px] text-[#b3b3b3]">Signal/Slot Editor</h2>
            </header>
            <div class="flex h-[34px] items-center gap-4 border-b border-[#9c9c9c] bg-linear-to-b from-[#f4f4f4] to-[#d4d4d4] pl-[7px]">
                <button type="button" aria-label="Add connection"><svg class="size-5"><use href="#plus"/></svg></button>
                <button type="button" aria-label="Remove connection"><svg class="size-5"><use href="#minus"/></svg></button>
            </div>
            <div class="flex h-[17px] items-center border-b border-[#e2e2e2] text-[11px]">
                <span class="flex w-[100px] items-center justify-between border-r border-[#e0e0e0] pr-[6px] pl-[5px] leading-3">Sender<b class="border-x-4 border-t-8 border-x-transparent border-t-[#8a8a8a]"></b></span>
                <span class="w-[100px] border-r border-[#e0e0e0] pl-[5px] leading-3">Signal</span>
                <span class="w-[100px] border-r border-[#e0e0e0] pl-[5px] leading-3">Receiver</span>
                <span class="pl-[5px] leading-3">Slot</span>
            </div>
        </section>

        <!-- Resource Browser -->
        <section class="absolute top-[1328px] right-[18px] flex h-[245px] w-[512px] flex-col overflow-hidden rounded-lg bg-white shadow-[0_6px_20px_rgba(0,0,0,0.35)] ring-1 ring-black/15">
            <header class="grid h-5 shrink-0 grid-cols-[1fr_auto_1fr] items-center border-b border-[#d5d5d5] bg-[#ececec] px-[5px]">
                <span class="flex gap-[6px]"><i class="size-[9px] rounded-full border border-[#b6b6b6] bg-[#d1d1d1]"></i><i class="size-[9px] rounded-full border border-[#b6b6b6] bg-[#d1d1d1]"></i><i class="size-[9px] rounded-full border border-[#b6b6b6] bg-[#d1d1d1]"></i></span>
                <h2 class="text-[11px] text-[#b3b3b3]">Resource Browser</h2>
            </header>
            <div class="flex h-[34px] items-center gap-[14px] border-b border-[#9c9c9c] bg-linear-to-b from-[#f4f4f4] to-[#d4d4d4] pr-px pl-[6px]">
                <button type="button" aria-label="Edit resources"><svg class="size-[22px]"><use href="#pencil"/></svg></button>
                <button type="button" aria-label="Reload"><svg class="size-[22px]"><use href="#reload"/></svg></button>
                <input type="text" aria-label="Filter resources" placeholder="Filter" class="ml-auto h-[21px] w-[218px] border border-[#e0e0e0] border-b-[#b0b0b0] bg-white px-px text-[13px] font-normal placeholder-[#8f8f8f] outline-none">
            </div>
            <div class="grid flex-1 grid-cols-[1fr_8px_1fr]">
                <div class="pt-[2px] pl-[26px] text-[13px] font-normal">&lt;resource root&gt;</div>
                <div class="flex items-center justify-center border-x border-[#c4c4c4] bg-[#f0f0f0]"><i class="size-[6px] shrink-0 rounded-full bg-[#dcdcdc]"></i></div>
                <div></div>
            </div>
        </section>

        <!-- numbered callouts -->
        <span class="absolute top-[496px] left-[664px] font-['DejaVu_Sans',sans-serif] text-[62px] leading-[62px] font-normal text-[#e60000]">1</span>
        <span class="absolute top-[38px] left-[467px] font-['DejaVu_Sans',sans-serif] text-[62px] leading-[62px] font-normal text-[#e60000]">2</span>
        <span class="absolute top-[34px] right-[377px] font-['DejaVu_Sans',sans-serif] text-[62px] leading-[62px] font-normal text-[#e60000]">3</span>
        <span class="absolute top-[1222px] left-[629px] font-['DejaVu_Sans',sans-serif] text-[62px] leading-[62px] font-normal text-[#e60000]">4</span>
    </main>

    <script>
        const mainTools = ['|', 'page:New', 'open:Open', 'save:Save', '|', 'back:Send to Back', 'front:Bring to Front', '|',
            'editwidgets:Edit Widgets', 'signals:Edit Signals/Slots', 'buddy:Edit Buddies', 'taborder:Edit Tab Order'];
        const layoutTools = ['|', 't-h:Lay Out Horizontally', 't-v:Lay Out Vertically', 't-hs:Horizontal Splitter', 't-vs:Vertical Splitter',
            't-grid:Lay Out in a Grid', 't-form:Lay Out in a Form', 't-break:Break Layout', 't-adjust:Adjust Size'];

        const widgets = {
            'Layouts': [['vlayout', 'Vertical Layout'], ['hlayout', 'Horizontal Layout'], ['gridlayout', 'Grid Layout'], ['formlayout', 'Form Layout']],
            'Spacers': [['hspacer', 'Horizontal Spacer'], ['vspacer', 'Vertical Spacer']],
            'Buttons': [['pushbutton', 'Push Button'], ['toolbutton', 'Tool Button'], ['radio', 'Radio Button'], ['checkbox', 'Check Box'],
                ['commandlink', 'Command Link Button'], ['buttonbox', 'Dialog Button Box']],
            'Item Views (Model-Based)': [['list', 'List View'], ['tree', 'Tree View'], ['table', 'Table View'], ['column', 'Column View']],
            'Item Widgets (Item-Based)': [['list', 'List Widget'], ['tree', 'Tree Widget'], ['table', 'Table Widget']],
            'Containers': [['groupbox', 'Group Box'], ['scrollarea', 'Scroll Area'], ['toolbox', 'Tool Box'], ['tabwidget', 'Tab Widget'],
                ['stacked', 'Stacked Widget'], ['frame', 'Frame'], ['widget', 'Widget'], ['mdi', 'MDI Area'], ['dock', 'Dock Widget']],
            'Input Widgets': [['combo', 'Combo Box'], ['fontcombo', 'Font Combo Box'], ['lineedit', 'Line Edit'], ['textedit', 'Text Edit'],
                ['plaintext', 'Plain Text Edit'], ['spin', 'Spin Box'], ['dspin', 'Double Spin Box'], ['time', 'Time Edit'], ['date', 'Date Edit'],
                ['datetime', 'Date/Time Edit'], ['dial', 'Dial'], ['hscroll', 'Horizontal Scroll Bar'], ['vscroll', 'Vertical Scroll Bar'],
                ['hslider', 'Horizontal Slider'], ['vslider', 'Vertical Slider'], ['lineedit', 'Key Sequence Edit']],
            'Display Widgets': [['label', 'Label'], ['textedit', 'Text Browser'], ['graphics', 'Graphics View'], ['calendar', 'Calendar Widget'],
                ['lcd', 'LCD Number'], ['progress', 'Progress Bar'], ['hline', 'Horizontal Line'], ['vline', 'Vertical Line'], ['widget', 'OpenGL Widget']]
        };

        // name, value (true/false = check box), flags: b bold, > closed, v open, c child, t tall
        const properties = [
            { name: 'QObject', colors: ['bg-[#fff2e6]'], rows: [['objectName', 'Dialog', 'b']] },
            { name: 'QWidget', colors: ['bg-[#ffffe3]', 'bg-[#ffffca]'], rows: [
                ['windowModality', 'NonModal', ''], ['enabled', true, ''], ['geometry', '[(0, 0), 640 x 480]', 'b>'],
                ['sizePolicy', '[Preferred, Preferred, 0, 0]', '>'], ['minimumSize', '0 x 0', '>'], ['maximumSize', '16777215 x 16777215', '>'],
                ['sizeIncrement', '0 x 0', '>'], ['baseSize', '0 x 0', '>'], ['palette', 'Inherited', ''],
                ['font', '<span class="pr-[14px] pl-1 text-[12px]">A</span>[.AppleSystemUIFont, 13]', 'v'],
                ['Family', '.AppleSystemUIFont', 'c'], ['Point Size', '13', 'c'], ['Bold', false, 'c'], ['Italic', false, 'c'],
                ['Underline', false, 'c'], ['Strikeout', false, 'c'], ['Kerning', true, 'c'], ['Antialiasing', 'PreferDefault', 'c'],
                ['cursor', '<span class="flex items-center gap-3"><svg class="h-[18px] w-4"><use href="#pointer"/></svg>Arrow</span>', 't'],
                ['mouseTracking', false, ''], ['tabletTracking', false, ''], ['focusPolicy', 'NoFocus', ''],
                ['contextMenuPolicy', 'DefaultContextMenu', ''], ['acceptDrops', false, ''], ['windowTitle', 'Dialog', 'b>'],
                ['windowIcon', '', '>'], ['windowOpacity', '1.000000', ''], ['toolTip', '', '>'], ['toolTipDuration', '-1', ''],
                ['statusTip', '', '>'], ['whatsThis', '', '>'], ['accessibleName', '', '>'], ['accessibleDescription', '', '>'],
                ['layoutDirection', 'LeftToRight', ''], ['autoFillBackground', false, ''], ['styleSheet', '', ''],
                ['locale', 'English, UnitedStates', '>'], ['windowFilePath', '', '>'], ['inputMethodHints', 'ImhNone', '>']] },
            { name: 'QDialog', colors: ['bg-[#e6ffe6]', 'bg-[#ccffcc]'], rows: [['sizeGripEnabled', false, ''], ['modal', false, '']] }
        ];

        function toolbar(id, tools) {
            document.getElementById(id).innerHTML = tools.map(tool => {
                if (tool === '|') {
                    return '<span class="flex w-[5px] flex-col items-end justify-center gap-1">' + '<i class="size-[2px] bg-[#b0b0b0]"></i>'.repeat(5) + '</span>';
                }
                const [icon, title] = tool.split(':');
                const bg = icon === 'editwidgets' ? 'bg-black/10' : '';
                return `<button type="button" aria-label="${title}" class="flex w-[42px] items-center justify-center rounded ${bg}"><svg class="size-8"><use href="#${icon}"/></svg></button>`;
            }).join('');
        }

        function widgetBox() {
            document.getElementById('widgets').innerHTML = Object.entries(widgets).map(([group, items]) => `
                <button type="button" class="flex h-[19px] w-full items-center border-y border-[#ababab] bg-linear-to-b from-[#f6f6f6] to-[#e4e4e4] pl-[6px] text-[13px] font-normal">
                    <svg class="size-2 text-[#a6a6a6]"><use href="#down"/></svg><span class="flex-1">${group}</span>
                </button>
                <ul>${items.map(([icon, name]) => `
                    <li class="flex h-6 items-center gap-[10px] pl-[7px]"><svg class="size-[22px]"><use href="#${icon}"/></svg>${name}</li>`).join('')}
                </ul>`).join('');
        }

        function valueCell(name, value) {
            if (typeof value !== 'boolean') return value;
            return `<span class="grid size-[13px] place-items-center ml-[2px]">
                <input type="checkbox" id="p-${name}" ${value ? 'checked' : ''} class="peer col-start-1 row-start-1 size-[13px] appearance-none rounded-[3px] border border-[#d2d2c8] bg-white checked:border-[#1583fb] checked:bg-[#1583fb]">
                <svg viewBox="0 0 13 13" class="pointer-events-none invisible col-start-1 row-start-1 size-[13px] peer-checked:visible"><path d="M3.500 6.800l2.300 2.700 4-6" fill="none" stroke="#fff" stroke-width="1.700"/></svg>
            </span>`;
        }

        function propertyRows() {
            document.getElementById('properties').innerHTML = properties.map(group => `
                <tr class="h-5 bg-[#cbcbcb] font-bold text-white"><td colspan="2" class="border-b border-[#b5b5b9] py-0 pl-[10px]"><span class="flex items-center gap-3"><svg class="size-2 text-[#bdbdbd]"><use href="#down"/></svg>${group.name}</span></td></tr>
                ${group.rows.map(([name, value, flags], i) => {
                    const height = typeof value === 'boolean' || flags === 't' ? 'h-[22px]' : 'h-5';
                    const indent = flags.includes('c') ? 'pl-7' : 'pl-2';
                    const weight = flags.includes('b') ? 'font-bold' : '';
                    const arrow = flags.includes('>') ? '<use href="#right"/>' : flags.includes('v') ? '<use href="#down"/>' : '';
                    const label = typeof value === 'boolean' ? `<label for="p-${name}" class="${indent}">${name}</label>` : `<span class="${indent}">${name}</span>`;
                    return `<tr class="${height} ${group.colors[i % 2]}">
                        <td class="border-b border-[#b5b5b9] py-0 pl-[10px]"><span class="flex items-center ${weight}"><svg class="size-2 text-[#b9b99a]">${arrow}</svg>${label}</span></td>
                        <td class="border-b border-l border-[#b5b5b9] py-0 pl-[5px]">${valueCell(name, value)}</td></tr>`;
                }).join('')}`).join('');
        }

        toolbar('main-tools', mainTools);
        toolbar('layout-tools', layoutTools);
        widgetBox();
        propertyRows();
    </script>
</body>
</html>
